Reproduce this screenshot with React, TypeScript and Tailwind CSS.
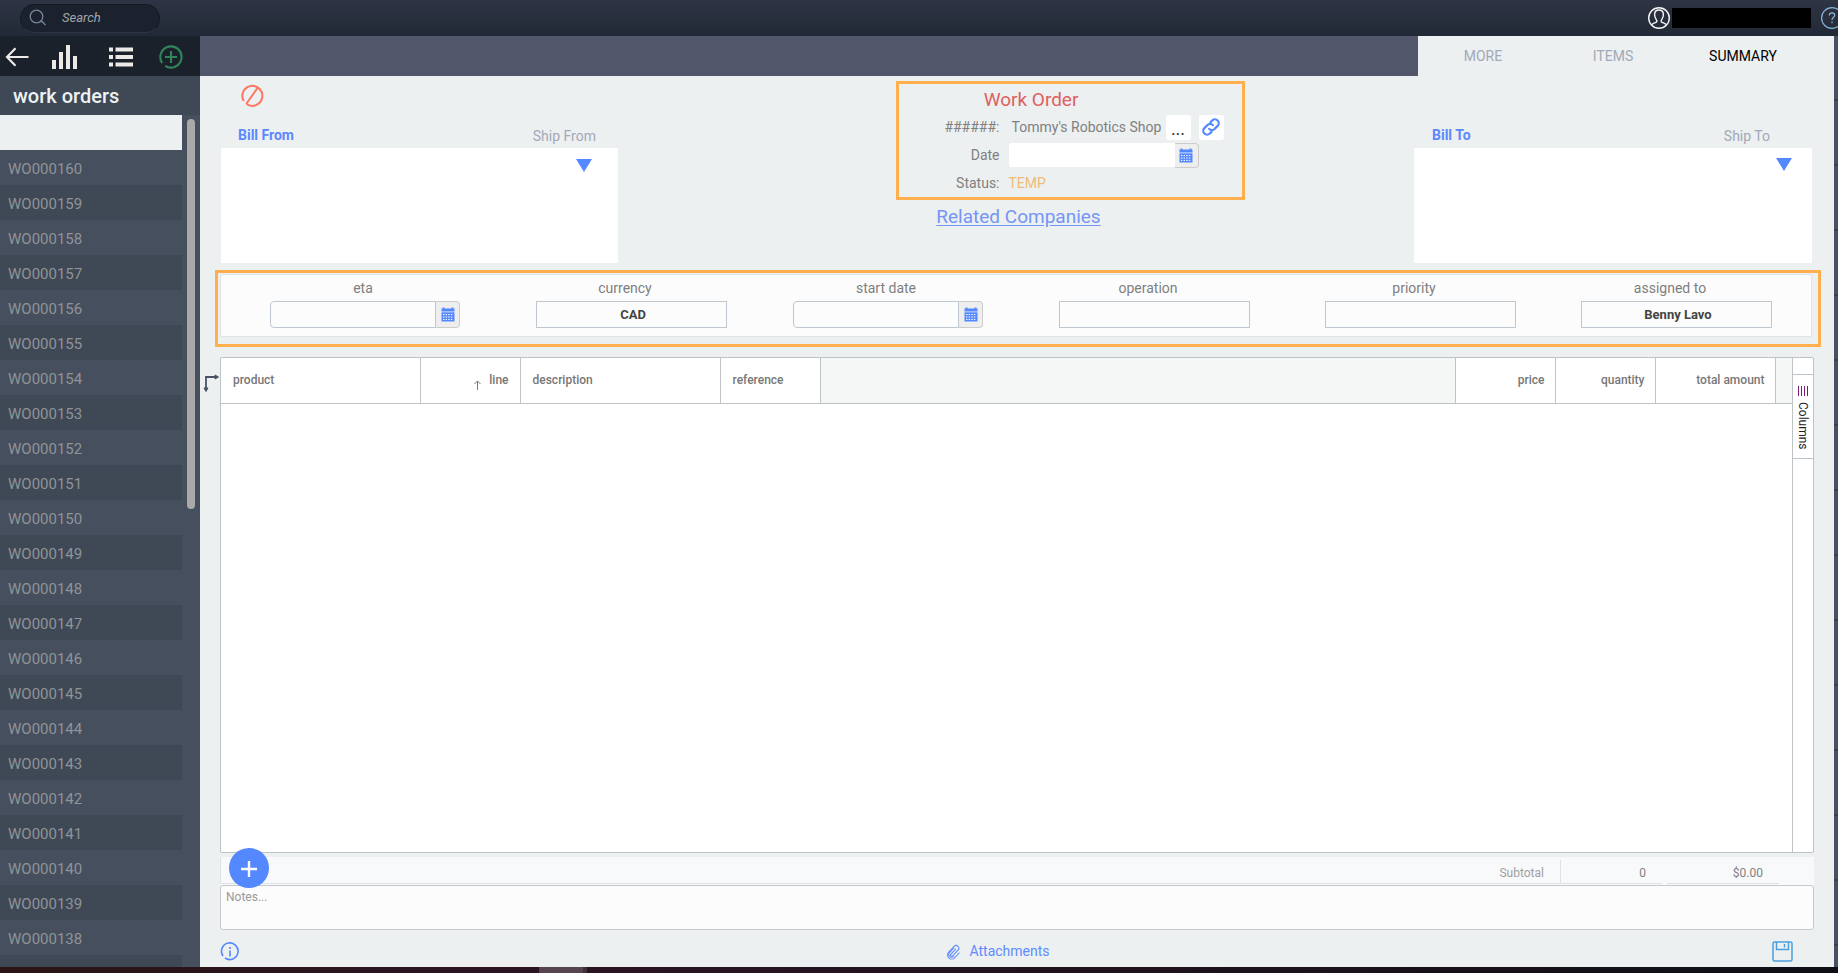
import React, { useState } from 'react';

interface Field {
  id: string;
  label: string;
  value: string;
  date?: boolean;
}

const orders = Array.from({ length: 23 }, (_, i) => `WO000${160 - i}`);

const fields: Field[] = [
  { id: 'eta', label: 'eta', value: '', date: true },
  { id: 'currency', label: 'currency', value: 'CAD' },
  { id: 'start', label: 'start date', value: '', date: true },
  { id: 'operation', label: 'operation', value: '' },
  { id: 'priority', label: 'priority', value: '' },
  { id: 'assigned', label: 'assigned to', value: 'Benny Lavo' },
];

const tabs = ['MORE', 'ITEMS', 'SUMMARY'];

const CalendarIcon: React.FC = () => (
  <svg width="14" height="15" viewBox="0 0 14 15" fill="#5488ff">
    <path d="M0.5 1.5h1V0.6h2v0.9h7V0.6h2v0.9h1v3h-13z" />
    <path d="M0.5 5.3h13v9.2h-13z" />
    <path
      d="M2 7.6h1.5M4.6 7.6h1.5M7.2 7.6h1.5M9.8 7.6h1.5M2 10h1.5M4.6 10h1.5M7.2 10h1.5M9.8 10h1.5M2 12.4h1.5M4.6 12.4h1.5M7.2 12.4h1.5M9.8 12.4h1.5"
      stroke="#ffffff"
      strokeWidth="1"
    />
  </svg>
);

const TopBar: React.FC = () => (
  <header className="flex h-9 shrink-0 items-center justify-between overflow-hidden bg-gradient-to-b from-[#2e3443] to-[#222936] pl-5">
    <label className="flex h-[29px] w-[140px] items-center rounded-full border border-[#151b26] border-b-[#2c3444] bg-[#1b222e] pl-2">
      <svg width="18" height="18" viewBox="0 0 18 18" fill="none" stroke="#76879a" strokeWidth="1.3">
        <circle cx="7.5" cy="7.5" r="6.3" />
        <path d="M11.5 12.5h1.6l3.4 3.6" />
      </svg>
      <input
        type="search"
        aria-label="Search"
        placeholder="Search"
        className="ml-[15px] w-[80px] bg-transparent text-[13px] text-white italic outline-none placeholder:text-[#a3a5a6]"
      />
    </label>
    <div className="flex items-center">
      <button aria-label="Account">
        <svg width="24" height="24" viewBox="0 0 24 24" fill="none" stroke="#f4f6f7" strokeWidth="1.4">
          <circle cx="12" cy="12" r="10.3" />
          <path d="M4.5 19c1-1.6 2.8-2 4.2-2.5 1.3-.5 1.5-1.5.7-2.6C8 12 7.6 10.6 7.6 8.6 7.6 5.8 9.4 4 12 4s4.4 1.8 4.4 4.6c0 2-.4 3.4-1.8 5.3-.8 1.1-.6 2.1.7 2.6 1.400.5 3.200.9 4.200 2.500" />
        </svg>
      </button>
      <div className="mr-[9px] ml-px h-5 w-[139px] bg-black" />
      <button aria-label="Help" className="-mr-[6px]">
        <svg width="24" height="24" viewBox="0 0 24 24" fill="none" stroke="#8ab6da" strokeWidth="1.2">
          <circle cx="12" cy="12" r="10.4" />
          <path d="M9.3 9.6c0-1.800 1.100-2.800 2.700-2.800s2.700 1 2.700 2.500c0 1.900-2.700 2.100-2.700 4.700M12 15.600v1.600" />
        </svg>
      </button>
    </div>
  </header>
);

const Sidebar: React.FC = () => (
  <aside className="flex w-[200px] shrink-0 flex-col bg-[#464f5d]">
    <nav className="flex h-10 shrink-0 items-center bg-[#1a212a] pt-[2px] pl-[5px] text-[#ece9e6]">
      <button aria-label="Back" className="mr-[23px]">
        <svg width="24" height="22" viewBox="0 0 24 22" fill="none" stroke="currentColor" strokeWidth="2.2">
          <path d="M23.5 11H2M10.5 2.2L2 11l8.5 8.8" />
        </svg>
      </button>
      <button aria-label="Charts" className="mr-8">
        <svg width="25" height="24" viewBox="0 0 25 24" fill="currentColor">
          <path d="M0 15h4v9H0zM7 7h4v17H7zM14 0h4v24h-4zM21 11h4v13h-4z" />
        </svg>
      </button>
      <button aria-label="List" className="mr-[26px]">
        <svg width="24" height="20" viewBox="0 0 24 20" fill="currentColor">
          <path d="M0 0.5h4v4H0zM6.5 0.5H24v4H6.5zM0 8h4v4H0zM6.5 8H24v4H6.5zM0 15.5h4v4H0zM6.5 15.5H24v4H6.5z" />
        </svg>
      </button>
      <button aria-label="New work order">
        <svg width="24" height="24" viewBox="0 0 24 24" fill="none" stroke="#2f855a" strokeWidth="2.1">
          <path d="M3.2 18A10.6 10.6 0 1 1 6.2 20.9M12 6v12M6 12h12" />
        </svg>
      </button>
    </nav>
    <h1 className="h-[39px] shrink-0 bg-[#3f4855] pl-[13px] text-[20px] leading-[41px] font-medium text-[#ecf3f4]">
      work orders
    </h1>
    <div className="flex min-h-0 flex-1 justify-between overflow-hidden">
      <ul className="w-[182px]">
        <li className="h-[35px] bg-[#ecf0f1]" />
        {orders.map((order) => (
          <li key={order} className="h-[35px] pl-2 text-[15px] leading-[38px] text-[#8f9498] even:bg-[#464f5d] odd:bg-[#3f4855]">
            <a href="#">{order}</a>
          </li>
        ))}
        <li className="h-[35px] bg-[#3f4855]" />
      </ul>
      <div className="mt-1 mr-[5px] h-[390px] w-2 rounded-full bg-[#a9a9a9]" />
    </div>
  </aside>
);

interface PartyBoxProps {
  bill: string;
  ship: string;
  labelClass: string;
  arrowClass: string;
}

const PartyBox: React.FC<PartyBoxProps> = ({ bill, ship, labelClass, arrowClass }) => (
  <div>
    <div className={`flex h-6 items-start justify-between text-[14px] ${labelClass}`}>
      <button className="leading-[22px] font-bold text-[#5c88ff]">{bill}</button>
      <button className="leading-6 text-[#a2a9b9]">{ship}</button>
    </div>
    <div className={`flex h-[115px] items-start justify-end bg-white ${arrowClass}`}>
      <button aria-label={`Choose ${bill}`}>
        <svg width="16" height="13" viewBox="0 0 16 13" fill="#5488ff">
          <path d="M0 0h16L8 13z" />
        </svg>
      </button>
    </div>
  </div>
);

const OrderCard: React.FC = () => (
  <section className="ml-[108px] h-[119px] w-[349px] border-3 border-[#ffaf4b] text-[14px] text-[#808080]">
    <h2 className="h-[29px] pr-[78px] text-center text-[19px] leading-[31px] text-[#df6060]">Work Order</h2>
    <div className="flex h-7 items-center">
      <span className="w-[101px] text-right">######:</span>
      <span className="w-[166px] pl-3 whitespace-nowrap">Tommy's Robotics Shop</span>
      <button className="h-[25px] w-[25px] rounded-[3px] bg-white text-[18px] leading-[27px] text-[#333333]">...</button>
      <button aria-label="Link" className="ml-2 flex h-[25px] w-[25px] items-center justify-center rounded-[3px] bg-white">
        <svg width="18" height="18" viewBox="0 0 24 24" fill="none" stroke="#5488ff" strokeWidth="2.9" strokeLinecap="round">
          <path d="M9.5 14.5a5 5 0 0 0 7.3 0l4-4A5.1 5.1 0 0 0 13.6 3.2l-2.3 2.3" />
          <path d="M14.5 9.5a5 5 0 0 0-7.3 0l-4 4a5.1 5.1 0 0 0 7.2 7.3l2.300-2.300" />
        </svg>
      </button>
    </div>
    <div className="flex h-7 items-center">
      <label htmlFor="order-date" className="w-[101px] text-right">Date</label>
      <input id="order-date" className="ml-[9px] h-6 w-[166px] rounded-l-[3px] bg-white px-2 outline-none" />
      <button aria-label="Pick date" className="flex h-[25px] w-6 items-center justify-center rounded-r-[4px] border border-l-0 border-[#cccccc] bg-[#eeeeee]">
        <CalendarIcon />
      </button>
    </div>
    <div className="flex h-7 items-center">
      <span className="w-[101px] text-right">Status:</span>
      <span className="ml-[9px] text-[#efbb78]">TEMP</span>
    </div>
  </section>
);

const FieldStrip: React.FC = () => (
  <section className="mr-[13px] ml-[15px] h-[77px] shrink-0 border-3 border-[#ffaf4b] pt-px pr-[6px] pl-[2px]">
    <div className="grid h-[63px] grid-cols-[288fr_244fr_270fr_262fr_270fr_242fr] rounded-[2px] border border-[#dfe4ea] bg-[#fcfcfc] pr-[14px]">
      {fields.map((f) => (
        <div key={f.id} className="flex flex-col items-center">
          <label
            htmlFor={f.id}
            className={
              f.date
                ? 'h-[26px] pr-1 text-[14px] leading-[26px] text-[#7f7f7f]'
                : 'h-[26px] pr-3 text-[14px] leading-[26px] text-[#7f7f7f]'
            }
          >
            {f.label}
          </label>
          {f.date ? (
            <div className="flex h-[27px] w-[190px]">
              <input id={f.id} className="min-w-0 flex-1 rounded-l-[4px] border border-[#bfc8d0] px-2 text-[13px] outline-none" />
              <button aria-label={`Pick ${f.label}`} className="flex w-6 items-center justify-center rounded-r-[4px] border border-l-0 border-[#cccccc] bg-[#eeeeee]">
                <CalendarIcon />
              </button>
            </div>
          ) : (
            <input
              id={f.id}
              defaultValue={f.value}
              className="h-[27px] w-[191px] border border-[#bfc8d0] pl-1 text-center text-[13px] font-bold text-[#444444] outline-none"
            />
          )}
        </div>
      ))}
    </div>
  </section>
);

const LineGrid: React.FC = () => (
  <section className="relative mx-5 mt-[10px] flex min-h-0 flex-1 rounded-[2px] border border-[#bdc3c7] bg-white">
    <button aria-label="Move" className="absolute top-4 -left-[18px]">
      <svg width="17" height="20" viewBox="0 0 17 20" fill="#4a5263" stroke="#4a5263">
        <path d="M3 15V3h10" fill="none" strokeWidth="1.8" />
        <path d="M12 1l3.5 2L12 5zM1 14l2 3.5L5 14z" />
      </svg>
    </button>
    <div className="min-w-0 flex-1 border-r border-[#bdc3c7]">
      <table className="w-full table-fixed border-collapse text-[12px] text-[#777777]">
        <thead>
          <tr className="h-[45px] border-b border-[#bdc3c7] [&>th]:border-r [&>th]:border-[#bdc3c7] [&>th]:font-medium">
            <th className="w-[199px] pl-3 text-left">product</th>
            <th className="w-[100px] pr-[11px] text-right">
              <svg width="7" height="10" viewBox="0 0 7 10" fill="none" stroke="#777777" className="mt-2 mr-2 inline">
                <path d="M3.5 10V1M0.5 4l3-3 3 3" />
              </svg>
              line
            </th>
            <th className="w-[200px] pl-3 text-left">description</th>
            <th className="w-[100px] pl-3 text-left">reference</th>
            <td className="border-r border-[#bdc3c7] bg-[#f5f7f7]" />
            <th className="w-[100px] pr-[10px] text-right">price</th>
            <th className="w-[100px] pr-[10px] text-right">quantity</th>
            <th className="w-[120px] pr-[10px] text-right">total amount</th>
            <td className="w-[17px] bg-[#f5f7f7]" />
          </tr>
        </thead>
        <tbody />
      </table>
    </div>
    <div className="w-5 pt-4">
      <button className="flex h-[85px] w-5 flex-col items-center gap-[6px] border-y border-[#bdc3c7] pt-[11px] text-[12px] leading-[18px] text-[#222222]">
        <svg width="11" height="10" viewBox="0 0 11 10" stroke="#7a1a7a" className="shrink-0">
          <path d="M0.5 0v10M3.5 0v10M6.5 0v10M9.5 0v10" />
        </svg>
        <span className="[writing-mode:vertical-rl]">Columns</span>
      </button>
    </div>
  </section>
);

const App: React.FC = () => {
  const [tab, setTab] = useState<string>('SUMMARY');
  const [notes, setNotes] = useState<string>('');

  return (
    <div className="flex h-screen flex-col overflow-hidden bg-[#ecf0f1] font-[Roboto,sans-serif]">
      <TopBar />
      <div className="flex min-h-0 flex-1">
        <Sidebar />
        <main className="flex min-w-0 flex-1 flex-col">
          <nav className="flex h-10 shrink-0 justify-end bg-[#52566a]">
            <div className="flex bg-[#ecf0f1] pr-[26px] text-[14px]">
              {tabs.map((t) => (
                <button key={t} onClick={() => setTab(t)} className={t === tab ? 'w-[130px] text-black' : 'w-[130px] text-[#a2a9b9]'}>
                  {t}
                </button>
              ))}
            </div>
          </nav>

          <div className="flex h-[194px] shrink-0 justify-between pr-[22px] pl-[21px]">
            <div className="w-[397px] pt-2">
              <button aria-label="Cancel order" className="mb-4 ml-5 block">
                <svg width="24" height="24" viewBox="0 0 24 24" fill="none" stroke="#ff7561" strokeWidth="2">
                  <path d="M2.8 17A10 10 0 1 1 5.6 20M5.2 20L16.5 4" />
                </svg>
              </button>
              <PartyBox bill="Bill From" ship="Ship From" labelClass="pl-[17px] pr-[22px]" arrowClass="pt-[11px] pr-[26px]" />
            </div>
            <div className="flex flex-col items-center pt-[5px]">
              <OrderCard />
              <a href="#" className="mt-1 ml-[5px] text-[19px] leading-[26px] text-[#7595f5] underline underline-offset-2">
                Related Companies
              </a>
            </div>
            <div className="w-[398px] pt-12">
              <PartyBox bill="Bill To" ship="Ship To" labelClass="pl-[18px] pr-[42px]" arrowClass="pt-[10px] pr-5" />
            </div>
          </div>

          <FieldStrip />
          <LineGrid />

          <section className="relative mx-5 mt-1 flex h-7 shrink-0 bg-[#f8f9fb] text-[12px] leading-8 text-[#808080]">
            <button aria-label="Add line" className="absolute -top-[9px] left-[9px] flex h-10 w-10 items-center justify-center rounded-full bg-[#5488ff]">
              <svg width="16" height="16" viewBox="0 0 16 16" stroke="#ffffff" strokeWidth="2.4" className="mt-[2px]">
                <path d="M8 0v16M0 8h16" />
              </svg>
            </button>
            <div className="h-[27px] flex-1 border-b border-l border-[#dde3e9] pr-4 text-right text-[#a0a0a0]">Subtotal</div>
            <div className="mt-[3px] h-6 w-[102px] border-b border-l border-[#dde3e9] pr-4 text-right leading-[26px]">0</div>
            <div className="mr-[35px] ml-[5px] h-[27px] w-[112px] border-b border-[#dde3e9] pr-4 text-right">$0.00</div>
          </section>

          <textarea
            aria-label="Notes"
            placeholder="Notes..."
            value={notes}
            onChange={(e) => setNotes(e.target.value)}
            className="mx-5 h-[45px] shrink-0 resize-none rounded-[3px] border border-[#c6c9cb] bg-[#fcfcfc] px-[5px] py-[2px] text-[12px] leading-[18px] outline-none placeholder:text-[#999999]"
          />

          <footer className="flex h-[37px] shrink-0 items-center justify-between pt-[6px] pr-[41px] pl-5">
            <button aria-label="Info">
              <svg width="20" height="20" viewBox="0 0 20 20" fill="none" stroke="#5488ff" strokeWidth="1.6">
                <path d="M3 14A8.3 8.3 0 1 1 5 16M10 8.5v6M10 5v2" />
              </svg>
            </button>
            <a href="#" className="flex items-center gap-2 pr-4 text-[14px] text-[#5f8bff]">
              <svg width="15" height="16" viewBox="0 0 24 24" fill="none" stroke="currentColor" strokeWidth="1.7" strokeLinecap="round">
                <path d="M15.5 7.5L8 15.500a1.800 1.800 0 0 0 2.700 2.600l8.600-9.100a4.300 4.300 0 0 0-6.300-6L4.300 12.200a6.500 6.500 0 0 0 9.400 9.100L21 13.600" />
                <path d="M12.500 5.500L5.600 12.900a4.300 4.300 0 0 0 6.300 5.900" />
              </svg>
              Attachments
            </a>
            <button aria-label="Save">
              <svg width="21" height="21" viewBox="0 0 21 21" fill="none" stroke="#4aa0dc" strokeWidth="1.5">
                <rect x="1" y="1" width="19" height="19" rx="1.5" />
                <path d="M4.5 1v7.5h12V1M12.5 3v3.5" />
              </svg>
            </button>
          </footer>
        </main>
        <div className="w-1 shrink-0 bg-[repeating-linear-gradient(to_bottom,#465161_0px,#465161_63px,#38424f_63px,#38424f_65px)]" />
      </div>
      <div className="flex h-[6px] shrink-0 bg-gradient-to-r from-[#2a1414] via-[#2a1424] via-30% to-[#0e0e16]">
        <div className="ml-[539px] w-[44px] bg-[#56444f]" />
        <div className="w-1 bg-[#40303c]" />
      </div>
    </div>
  );
};

export default App;
